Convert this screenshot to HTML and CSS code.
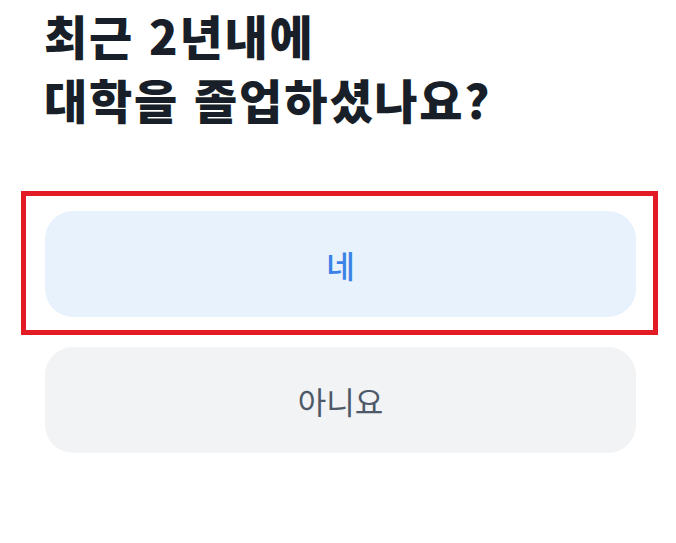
FILE: index.html
```html
<!DOCTYPE html>
<html lang="ko">
<head>
<meta charset="utf-8">
<link rel="stylesheet" href="styles.css">
</head>
<body>
<main class="page">
  <h1 class="title">최근 2년내에<br>대학을 졸업하셨나요?</h1>
  <div class="choices">
    <button class="choice choice-yes highlighted">네</button>
    <button class="choice choice-no">아니요</button>
  </div>
</main>
</body>
</html>
```
FILE: styles.css
```css
html, body {
  margin: 0;
  padding: 0;
  background: #ffffff;
}
.page {
  padding: 3px 0 0 44px;
  font-family: "Noto Sans CJK KR", "Noto Sans", sans-serif;
}
.title {
  margin: 0;
  font-size: 47px;
  line-height: 64px;
  font-weight: 900;
  color: #191f28;
  letter-spacing: 1.8px;
}
.choices {
  margin-top: 80px;
  margin-left: 1px;
  width: 591px;
  display: flex;
  flex-direction: column;
  gap: 30px;
}
.choice {
  height: 106px;
  border: none;
  border-radius: 28px;
  font-family: "Noto Sans CJK KR", "Noto Sans", sans-serif;
  font-size: 31px;
  padding: 0;
  cursor: pointer;
}
.choice-yes {
  background: #e8f2fd;
  color: #3b82e6;
  font-weight: 500;
}
.choice-no {
  background: #f2f3f5;
  color: #4e5968;
  font-weight: 400;
}
.highlighted {
  position: relative;
}
.highlighted::after {
  content: "";
  position: absolute;
  top: -20px;
  bottom: -18px;
  left: -24px;
  right: -22px;
  border: 5px solid #e21b25;
  pointer-events: none;
}
```
